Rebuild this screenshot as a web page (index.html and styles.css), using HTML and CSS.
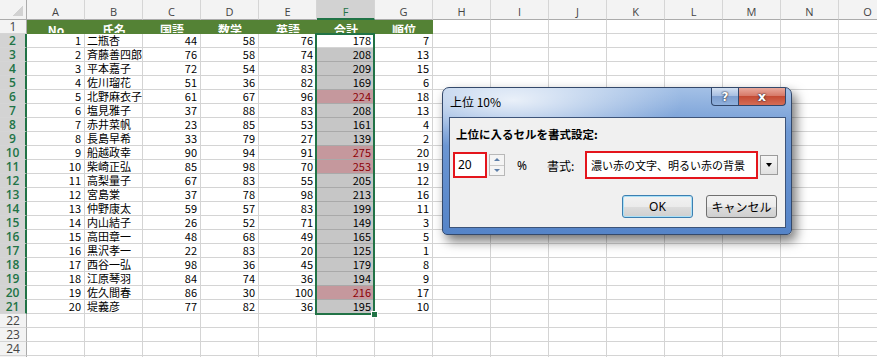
FILE: index.html
```html
<!DOCTYPE html>
<html lang="ja">
<head>
    <meta charset="UTF-8">
    <title>上位 10%</title>
    <link rel="stylesheet" href="styles.css">
</head>
<body>
    <div class="sheet">
        <div class="selection"><div class="fill-handle"></div></div>
    </div>

    <div class="dialog">
        <div class="titlebar">
            <span class="title">上位 10%</span>
            <div class="caption-buttons">
                <button class="caption help">?</button>
                <button class="caption close">x</button>
            </div>
        </div>
        <div class="client">
            <p class="prompt">上位に入るセルを書式設定:</p>
            <div class="field-row">
                <div class="percent-box">20</div>
                <div class="spinner">
                    <span class="spin up"></span>
                    <span class="spin down"></span>
                </div>
                <span class="unit">%</span>
                <span class="format-label">書式:</span>
                <div class="format-box">濃い赤の文字、明るい赤の背景</div>
                <div class="drop-button"><span class="caret"></span></div>
            </div>
            <div class="button-row">
                <button class="btn default">OK</button>
                <button class="btn">キャンセル</button>
            </div>
        </div>
    </div>

    <script>
        const data = [
            [1, '二瓶杏', 44, 58, 76, 178, 7],
            [2, '斉藤善四郎', 76, 58, 74, 208, 13],
            [3, '平本嘉子', 72, 54, 83, 209, 15],
            [4, '佐川瑠花', 51, 36, 82, 169, 6],
            [5, '北野麻衣子', 61, 67, 96, 224, 18],
            [6, '塩見雅子', 37, 88, 83, 208, 13],
            [7, '赤井菜帆', 23, 85, 53, 161, 4],
            [8, '長島早希', 33, 79, 27, 139, 2],
            [9, '船越政幸', 90, 94, 91, 275, 20],
            [10, '柴崎正弘', 85, 98, 70, 253, 19],
            [11, '高梨量子', 67, 83, 55, 205, 12],
            [12, '宮島棠', 37, 78, 98, 213, 16],
            [13, '仲野康太', 59, 57, 83, 199, 11],
            [14, '内山結子', 26, 52, 71, 149, 3],
            [15, '高田章一', 48, 68, 49, 165, 5],
            [16, '黒沢孝一', 22, 83, 20, 125, 1],
            [17, '西谷一弘', 98, 36, 45, 179, 8],
            [18, '江原琴羽', 84, 74, 36, 194, 9],
            [19, '佐久間春', 86, 30, 100, 216, 17],
            [20, '堤義彦', 77, 82, 36, 195, 10]
        ];
        const headers = ['No', '氏名', '国語', '数学', '英語', '合計', '順位'];
        const letters = 'ABCDEFGHIJKLMNO'.split('');

        const sheet = document.querySelector('.sheet');

        // top 20% of the totals get the red format
        const totals = data.map(row => row[5]).sort((a, b) => b - a);
        const cutoff = totals[Math.ceil(totals.length * 0.2) - 1];

        function cell(cls, text) {
            const d = document.createElement('div');
            d.className = cls;
            if (text !== undefined) d.textContent = text;
            sheet.appendChild(d);
            return d;
        }

        function blanks(n) {
            for (let i = 0; i < n; i++) cell('cell');
        }

        cell('corner');
        letters.forEach(l => cell(l === 'F' ? 'col-head selected' : 'col-head', l));

        cell('row-head', 1);
        headers.forEach(h => cell('cell title', h));
        blanks(letters.length - headers.length);

        data.forEach((row, r) => {
            cell('row-head selected', r + 2);
            cell('cell num', row[0]);
            cell('cell', row[1]);
            cell('cell num', row[2]);
            cell('cell num', row[3]);
            cell('cell num', row[4]);

            let cls = 'cell num sel';
            if (r === 0) cls = 'cell num active';
            else if (row[5] >= cutoff) cls = 'cell num sel top';
            cell(cls, row[5]);

            cell('cell num', row[6]);
            blanks(letters.length - 7);
        });

        for (let r = 22; r <= 25; r++) {
            cell('row-head', r);
            blanks(letters.length);
        }
    </script>
</body>
</html>
```

FILE: styles.css
```css
* {
    margin: 0;
    padding: 0;
    box-sizing: border-box;
}

body {
    font-family: "Noto Sans CJK JP", sans-serif;
    background: #fff;
    overflow: hidden;
    width: 877px;
    height: 357px;
}

/* worksheet */

.sheet {
    position: relative;
    display: grid;
    grid-template-columns: 27px repeat(15, 58px);
    grid-template-rows: 20px;
    grid-auto-rows: 14px;
    width: 897px;
}

.corner {
    background: #f3f3f3 linear-gradient(to top left, #d2d2d2 50%, transparent 50%) no-repeat right 3px bottom 3px / 10px 10px;
    border-right: 1px solid #ababab;
    border-bottom: 1px solid #ababab;
}

.col-head {
    background: #f3f3f3;
    border-right: 1px solid #d5d5d5;
    border-bottom: 1px solid #ababab;
    color: #444;
    font: 11px "Open Sans", sans-serif;
    line-height: 14px;
    padding-top: 5px;
    text-align: center;
}

.col-head.selected {
    background: #d2d2d2;
    color: #217346;
    border-bottom: 2px solid #217346;
}

.row-head {
    background: #f3f3f3;
    border-right: 1px solid #ababab;
    border-bottom: 1px solid #d5d5d5;
    color: #444;
    font: 12px "Open Sans", sans-serif;
    line-height: 13px;
    text-align: center;
}

.row-head.selected {
    background: #d3d3d3;
    color: #217346;
    font-weight: 600;
    border-right: 2px solid #217346;
}

.cell {
    border-right: 1px solid #d4d4d4;
    border-bottom: 1px solid #d4d4d4;
    color: #000;
    font-size: 11px;
    line-height: 13px;
    padding: 0 3px 0 2px;
    white-space: nowrap;
}

.cell.num {
    text-align: right;
}

.cell.title {
    display: flex;
    align-items: center;
    justify-content: center;
    background: #548235;
    border-color: #548235;
    color: #fff;
    font-weight: 700;
    line-height: 11px;
    overflow: hidden;
}

.cell.sel {
    background: #c6c6c6;
    border-bottom-color: #a9a9a9;
}

.cell.top {
    background: #c5989d;
    color: #8c0006;
}

.selection {
    position: absolute;
    left: 315px;
    top: 33px;
    width: 60px;
    height: 282px;
    border: 2px solid #217346;
    pointer-events: none;
}

.fill-handle {
    position: absolute;
    right: -5px;
    bottom: -5px;
    width: 7px;
    height: 7px;
    background: #217346;
    border: 1px solid #fff;
}

/* dialog */

.dialog {
    position: absolute;
    left: 442px;
    top: 87px;
    width: 350px;
    height: 148px;
    display: flex;
    flex-direction: column;
    padding: 0 5px 6px 6px;
    border: 1px solid #34496b;
    border-radius: 7px 7px 5px 5px;
    background:
        radial-gradient(ellipse 170px 50px at 70px 12px, rgba(255, 255, 255, 0.8), rgba(255, 255, 255, 0)),
        linear-gradient(#a3c0e6, #6f99d4 30%, #5584c8);
    box-shadow: 4px 6px 12px rgba(0, 0, 0, 0.55);
}

.titlebar {
    display: flex;
    justify-content: space-between;
    align-items: flex-start;
    height: 29px;
}

.title {
    font-size: 12px;
    line-height: 16px;
    padding: 6px 0 0 1px;
    color: #000;
}

.caption-buttons {
    display: flex;
}

.caption {
    height: 18px;
    border: 1px solid #31476b;
    border-top: none;
    color: #fff;
    font-family: "DejaVu Sans", sans-serif;
    font-weight: bold;
    text-shadow: 0 0 2px #223, 0 0 1px #223;
}

.help {
    width: 28px;
    border-radius: 0 0 0 4px;
    font-size: 12px;
    background: linear-gradient(#d3e0f1, #a9c0e2 45%, #7f9fcf 50%, #8fb0dc);
}

.close {
    width: 47px;
    border-left: none;
    border-radius: 0 0 4px 0;
    font-size: 13px;
    line-height: 14px;
    background: linear-gradient(#e9a99c, #d77a69 45%, #c44b34 50%, #d56d55);
}

.client {
    flex: 1;
    background: #f0f0f0;
    border: 1px solid #3d5479;
    color: #000;
}

.prompt {
    margin: 8px 0 0 6px;
    font-size: 11.5px;
    font-weight: bold;
    line-height: 16px;
}

.field-row {
    display: flex;
    align-items: center;
    height: 28px;
    margin-top: 9px;
    font-size: 12px;
}

.percent-box {
    margin-left: 3px;
    width: 34px;
    height: 26px;
    border: 2px solid #e4151c;
    background: #fff;
    padding-left: 3px;
    line-height: 22px;
    font-family: "Noto Sans", sans-serif;
}

.spinner {
    margin-left: 2px;
    width: 16px;
    height: 22px;
    display: flex;
    flex-direction: column;
    border: 1px solid #b8b8b8;
    background: #f4f4f4;
}

.spin {
    flex: 1;
    display: flex;
    justify-content: center;
    align-items: center;
}

.spin.up {
    border-bottom: 1px solid #c9c9c9;
}

.spin::after {
    content: "";
    border-left: 3px solid transparent;
    border-right: 3px solid transparent;
}

.spin.up::after {
    border-bottom: 3px solid #5d7ea8;
}

.spin.down::after {
    border-top: 3px solid #5d7ea8;
}

.unit {
    margin-left: 12px;
    width: 30px;
    font-family: "Noto Sans", sans-serif;
}

.format-label {
    width: 38px;
}

.format-box {
    width: 173px;
    height: 28px;
    border: 2px solid #e4151c;
    background: #fff;
    padding-left: 4px;
    font-size: 11px;
    line-height: 24px;
    white-space: nowrap;
    overflow: hidden;
}

.drop-button {
    margin-left: 2px;
    width: 18px;
    height: 20px;
    display: flex;
    justify-content: center;
    align-items: center;
    border: 1px solid #9c9c9c;
    background: linear-gradient(#f6f6f6, #e1e1e1);
}

.caret {
    border-left: 3px solid transparent;
    border-right: 3px solid transparent;
    border-top: 4px solid #000;
}

.button-row {
    display: flex;
    justify-content: flex-end;
    gap: 13px;
    margin-top: 16px;
    padding-right: 8px;
}

.btn {
    width: 71px;
    height: 23px;
    border: 1px solid #707070;
    border-radius: 3px;
    background: linear-gradient(#f2f2f2, #ebebeb 50%, #dddddd 51%, #cfcfcf);
    color: #000;
    font: 12px "Noto Sans", "Noto Sans CJK JP", sans-serif;
}

.btn.default {
    border-color: #3c7fb1;
    box-shadow: inset 0 0 0 1px #a9e0f7;
}
```
